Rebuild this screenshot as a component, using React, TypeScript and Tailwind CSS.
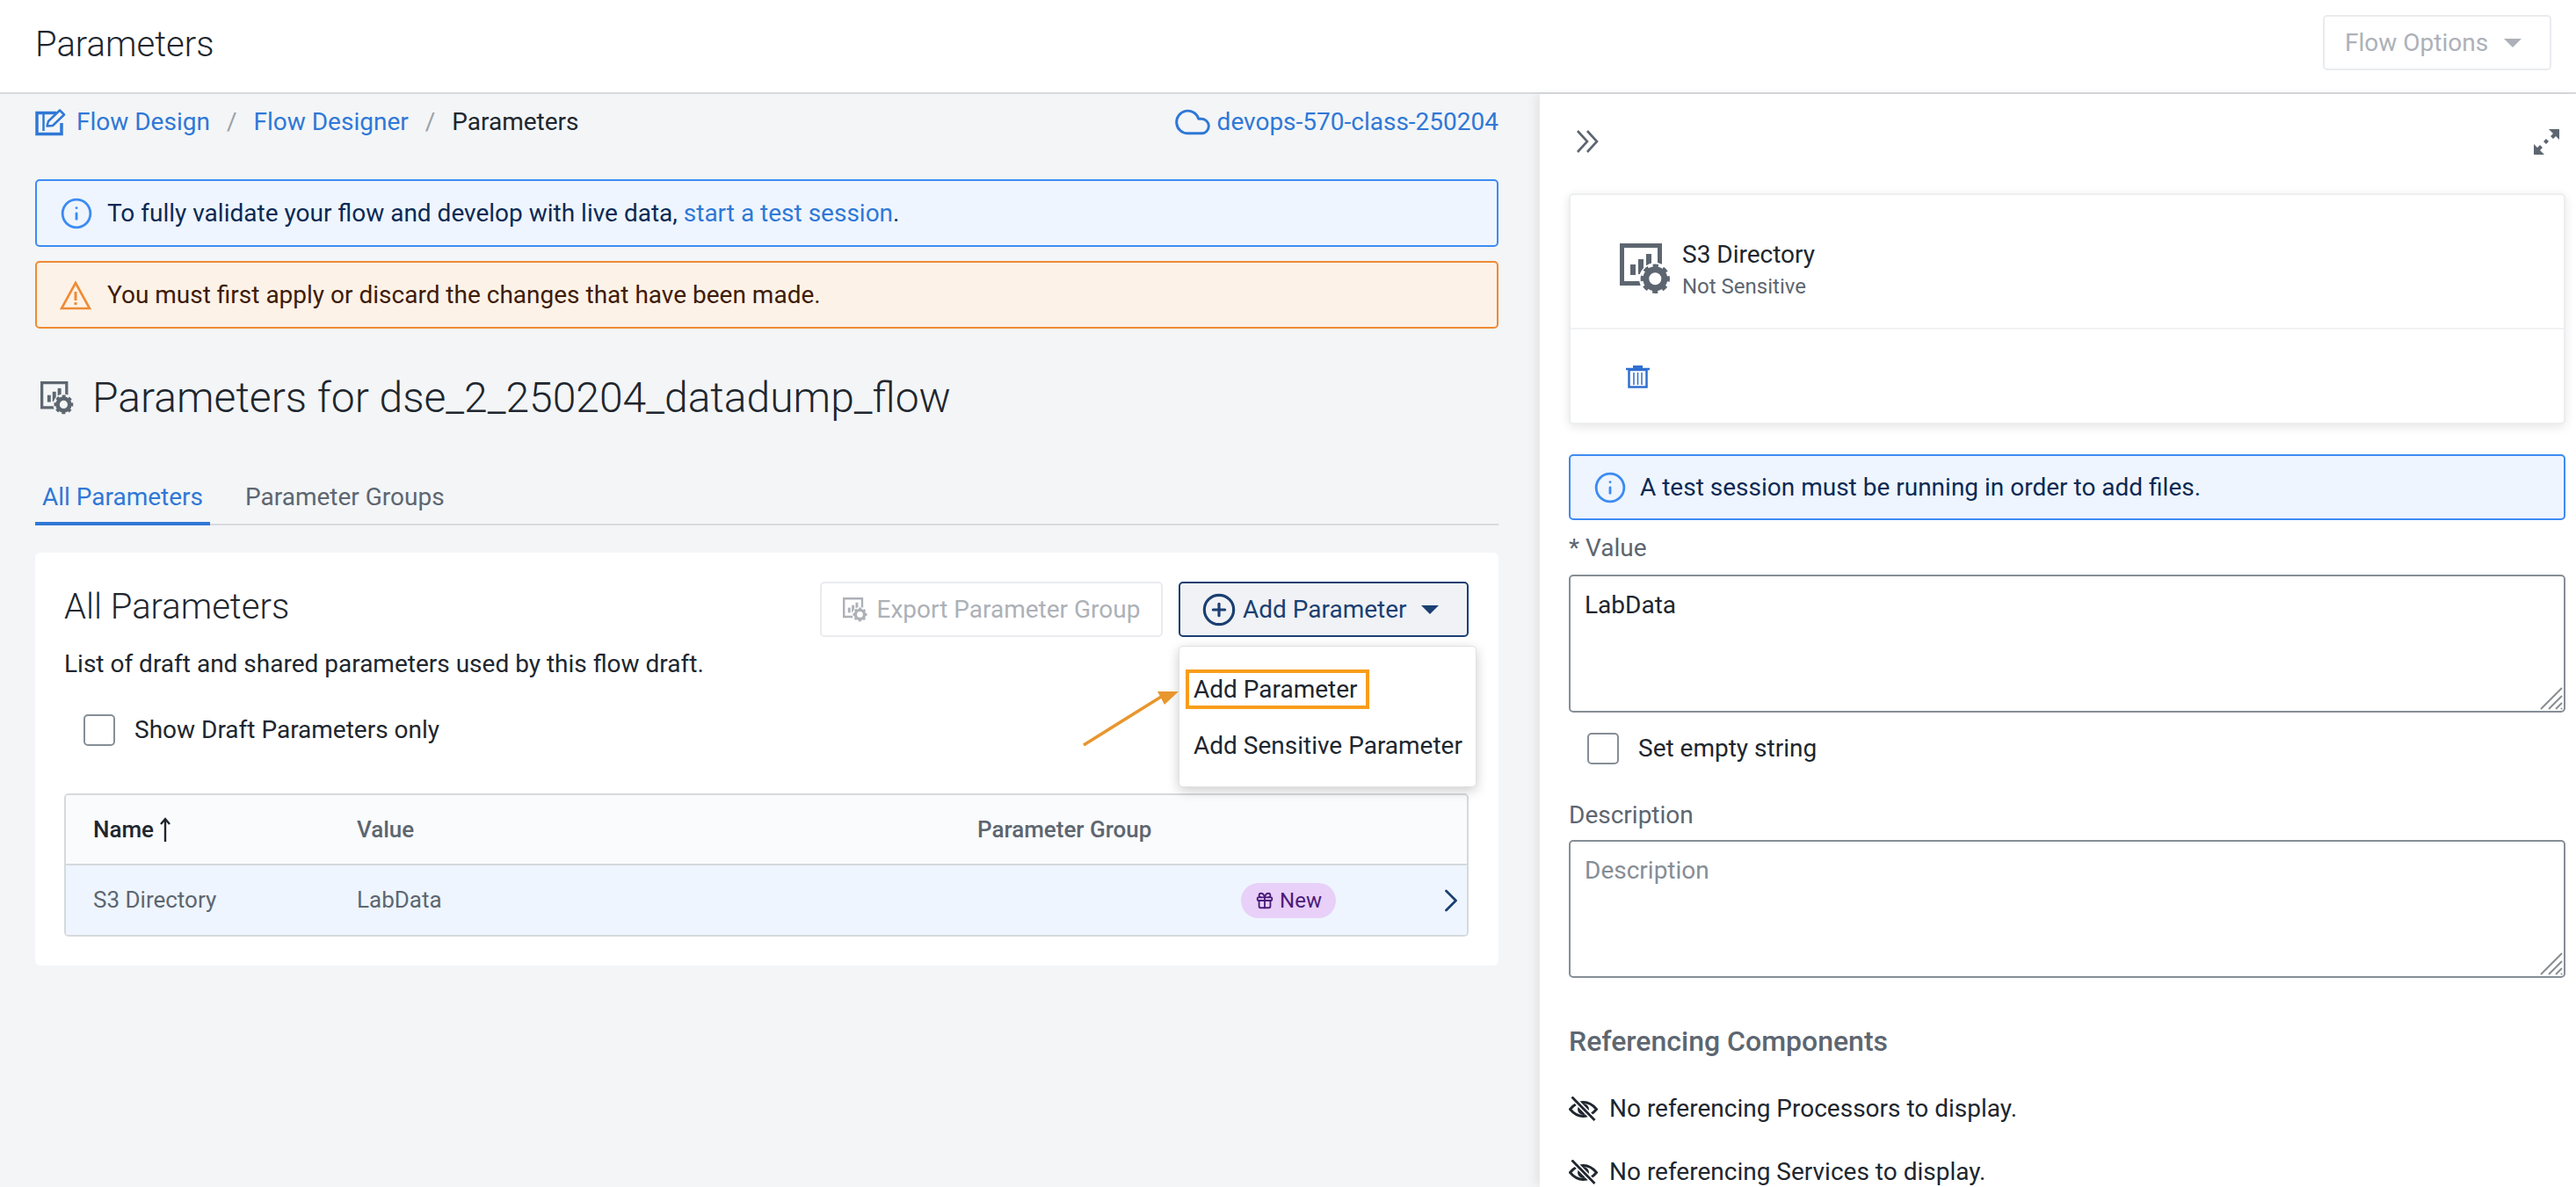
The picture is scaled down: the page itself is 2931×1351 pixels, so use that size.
import React from 'react';
import { Info, ChevronRight, Gift, CirclePlus, Cloud } from 'lucide-react';

// bars in a box with a gear on the corner; the halo has to match what's behind it
const ParamIcon: React.FC<{ className?: string; halo?: string }> = ({ className, halo = '#ffffff' }) => (
    <svg viewBox="0 0 58 58" className={className} fill="currentColor">
        <path d="M0 0h48v48H0zM5 5v38h38V5z" fillRule="evenodd" />
        <rect x="12" y="24" width="6" height="12" />
        <rect x="21" y="18" width="6" height="17" />
        <rect x="30" y="12" width="6" height="13" />
        <circle cx="40.300" cy="40.300" r="18.200" fill={halo} />
        <circle cx="40.300" cy="40.300" r="10.500" fill="none" stroke="currentColor" strokeWidth="7" />
        <circle cx="40.300" cy="40.300" r="14.700" fill="none" stroke="currentColor" strokeWidth="4" strokeDasharray="6 5.550" transform="rotate(-11.700 40.300 40.300)" />
    </svg>
);

const FlowDesignIcon = () => (
    <svg viewBox="0 0 38 32" className="w-[38px] h-[32px] text-[#2f78d6]" fill="none" stroke="currentColor">
        <path d="M24 5.500H2v24h28V17" strokeWidth="3.500" />
        <path d="M9.500 6v20" strokeWidth="2.500" />
        <path d="M13.500 20.500l1.500-5.500L28 2.500l5 5-13 12.500z" strokeWidth="2.500" strokeLinejoin="round" />
    </svg>
);

const EyeSlash = () => (
    <svg viewBox="0 0 34 28" className="w-[34px] h-[28px] text-[#20262e]" fill="none" stroke="currentColor">
        <path d="M1.500 14.500C6 9 11 6.500 16.500 6.500S27 9 31.500 14.500C27 20 22 22.500 16.500 22.500S6 20 1.500 14.500z" strokeWidth="2.800" />
        <circle cx="16.500" cy="14.500" r="6.500" fill="currentColor" stroke="none" />
        <path d="M3.500 0.500l26 26.500" stroke="#ffffff" strokeWidth="6" />
        <path d="M3.500 0.500l26 26.500" strokeWidth="2.800" />
    </svg>
);

const DoubleChevron = () => (
    <svg viewBox="0 0 27 26" className="w-[27px] h-[26px] text-[#5d6670]" fill="none" stroke="currentColor" strokeWidth="2.600">
        <path d="M2 1l11 12L2 25M13 1l11 12-11 12" />
    </svg>
);

const Expand = () => (
    <svg viewBox="0 0 29 29" className="w-[29px] h-[29px] text-[#5d6670]" fill="currentColor">
        <path d="M17 0h12v12l-4-4-3 3-3-3 3-3zM0 29V17l4 4 3-3 3 3-3 3 5 5z" />
        <path d="M11 14l3-3 3 3-3 3z" />
    </svg>
);

const TrashIcon = () => (
    <svg viewBox="0 0 27 27" className="w-[27px] h-[27px] text-[#2f6fd0]" fill="none" stroke="currentColor">
        <path d="M0 5h27" strokeWidth="2.500" />
        <rect x="8" y="1" width="11" height="3" fill="currentColor" stroke="none" />
        <rect x="3.500" y="6" width="20" height="19.500" strokeWidth="2.500" />
        <path d="M9 9v14M13.500 9v14M18 9v14" strokeWidth="1.500" />
    </svg>
);

const WarnIcon = () => (
    <svg viewBox="0 0 36 34" className="w-[36px] h-[34px] text-[#ef8a34]" fill="none" stroke="currentColor">
        <path d="M18 3L34 32H2z" strokeWidth="2.600" />
        <path d="M18 13v10M18 25v3" strokeWidth="3" />
    </svg>
);

const SortArrow = () => (
    <svg viewBox="0 0 14 28" className="ml-[6px] w-[14px] h-[28px] text-[#20262e]" fill="none" stroke="currentColor" strokeWidth="2.400">
        <path d="M7 2v26M2 8l5-6 5 6" />
    </svg>
);

const Grip = () => (
    <svg viewBox="0 0 26 26" className="absolute right-[3px] bottom-[3px] w-[26px] h-[26px] text-[#8a8d90] pointer-events-none" stroke="currentColor" strokeWidth="2">
        <path d="M1 25L25 1M10 25L25 10M18 25l7-7M24 25l1-1" />
    </svg>
);

const Caret: React.FC<{ className: string }> = ({ className }) => (
    <span className={`inline-block w-0 h-0 border-x-[10px] border-x-transparent border-t-[10px] ${className}`} />
);

const Alert: React.FC<{ children: React.ReactNode; className?: string }> = ({ children, className }) => (
    <div className={`h-[77px] rounded-[5px] border-2 flex items-center text-[28px] ${className}`}>{children}</div>
);

const Checkbox: React.FC<{ label: string; className?: string }> = ({ label, className }) => (
    <div className={`h-[36px] flex items-center ${className}`}>
        <span className="w-[36px] h-[36px] rounded-[5px] border-2 border-[#868e96] bg-white shrink-0" />
        <span className="ml-[22px] text-[28px] text-[#20262e]">{label}</span>
    </div>
);

const App: React.FC = () => {
    return (
        <div className="w-[2931px] h-[1351px] overflow-hidden flex flex-col bg-[#f3f5f7] font-['Roboto',sans-serif]">
            <header className="h-[107px] shrink-0 bg-white border-b-2 border-[#d8dade] flex items-center justify-between pl-10 pr-7">
                <h1 className="text-[40px] font-light text-[#20262e] -mt-[4px]">Parameters</h1>
                <button className="w-[260px] h-[63px] -mt-[8px] pl-[23px] rounded-[5px] border-2 border-[#e9ebee] bg-white text-[28px] text-[#adb1b7] flex items-center gap-[18px]">
                    Flow Options <Caret className="border-t-[#adb1b7]" />
                </button>
            </header>

            <div className="flex flex-1 min-h-0">
                <main className="w-[1752px] shrink-0 pl-10 pr-[47px]">
                    <nav className="h-[64px] flex items-center text-[28px]">
                        <FlowDesignIcon />
                        <a className="ml-[9px] text-[#2f78d6]">Flow Design</a>
                        <span className="mx-[19px] text-[#9ba1a8]">/</span>
                        <a className="text-[#2f78d6]">Flow Designer</a>
                        <span className="mx-[19px] text-[#9ba1a8]">/</span>
                        <span className="text-[#20262e]">Parameters</span>
                        <span className="ml-auto flex items-center text-[#2f78d6]">
                            <Cloud className="w-[44px] h-[44px]" strokeWidth={1.6} />
                            <span className="ml-[6px]">devops-570-class-250204</span>
                        </span>
                    </nav>

                    <Alert className="mt-[33px] border-[#3d8bf2] bg-[#eef5fe] text-[#0b2a55]">
                        <Info className="ml-[26px] w-[38px] h-[38px] text-[#3d8bf2]" strokeWidth={1.8} />
                        <span className="ml-[16px]">To fully validate your flow and develop with live data, <a className="text-[#2f78d6]">start a test session</a>.</span>
                    </Alert>
                    <Alert className="mt-[16px] border-[#ef8a34] bg-[#fdf2e7] text-[#3f1b08]">
                        <span className="ml-[26px]"><WarnIcon /></span>
                        <span className="ml-[18px]">You must first apply or discard the changes that have been made.</span>
                    </Alert>

                    <div className="mt-[47px] h-[64px] flex items-center">
                        <ParamIcon className="ml-[6px] w-[38px] h-[38px] text-[#5d6670]" halo="#f3f5f7" />
                        <h2 className="ml-[21px] text-[48px] font-light text-[#20262e]">Parameters for dse_2_250204_datadump_flow</h2>
                    </div>

                    <div className="mt-[45px] h-[68px] flex border-b-2 border-[#d8dade] text-[28px]">
                        <div className="w-[199px] h-[68px] flex justify-center pt-[15px] border-b-4 border-[#2f78d6] text-[#2f78d6]">All Parameters</div>
                        <div className="ml-[40px] pt-[15px] text-[#5d6670]">Parameter Groups</div>
                    </div>

                    <section className="relative mt-[31px] bg-white rounded-[6px] pl-[33px] pr-[34px] py-[33px]">
                        <div className="flex items-start">
                            <h3 className="h-[58px] flex items-center text-[40px] font-light text-[#20262e]">All Parameters</h3>
                            <button className="ml-auto w-[390px] h-[63px] rounded-[5px] border-2 border-[#e9ebee] bg-white text-[28px] text-[#adb1b7] flex items-center justify-center">
                                <ParamIcon className="w-[28px] h-[28px]" />
                                <span className="ml-[11px]">Export Parameter Group</span>
                            </button>
                            <button className="ml-[18px] w-[330px] h-[63px] rounded-[5px] border-2 border-[#1b3f72] bg-[#f0f2f5] text-[28px] text-[#1b3f72] flex items-center">
                                <CirclePlus className="ml-[24px] w-[40px] h-[40px]" strokeWidth={1.9} />
                                <span className="ml-[7px]">Add Parameter</span>
                                <Caret className="ml-[16px] border-t-[#1b3f72]" />
                            </button>
                        </div>
                        <p className="mt-[12px] h-[38px] flex items-center text-[28px] text-[#20262e]">List of draft and shared parameters used by this flow draft.</p>
                        <Checkbox label="Show Draft Parameters only" className="mt-[38px] ml-[22px]" />

                        <div className="mt-[54px] border-2 border-[#d6d9dd] rounded-[5px] text-[26px] overflow-hidden">
                            <div className="h-[80px] grid grid-cols-[331px_706px_300px_233px_24px] items-center bg-[#fafbfd] border-b-2 border-[#d6d9dd] font-medium text-[#5d6670]">
                                <span className="pl-[31px] flex items-center text-[#20262e]">Name <SortArrow /></span>
                                <span>Value</span>
                                <span>Parameter Group</span>
                            </div>
                            <div className="h-[79px] grid grid-cols-[331px_706px_300px_233px_24px] items-center bg-[#eef5fe] text-[#5d6670]">
                                <span className="pl-[31px]">S3 Directory</span>
                                <span>LabData</span>
                                <span />
                                <span className="w-[108px] h-[40px] rounded-full bg-[#e8d0f8] text-[#4a1a7a] flex items-center justify-center text-[24px]">
                                    <Gift className="w-[22px] h-[22px]" strokeWidth={2} />
                                    <span className="ml-[6px]">New</span>
                                </span>
                                <ChevronRight className="w-[44px] h-[44px] -ml-[16px] text-[#1b3f72]" strokeWidth={1.5} />
                            </div>
                        </div>

                        <div className="absolute left-[1301px] top-[106px] w-[339px] h-[161px] bg-white rounded-[5px] border border-[#dfe1e4] shadow-[0_4px_14px_rgba(0,0,0,0.2)] text-[28px] text-[#20262e]">
                            <div className="mt-[26px] ml-[7px] w-[209px] h-[45px] border-[4px] border-[#f99d1c] flex items-center pl-[5px]">Add Parameter</div>
                            <div className="mt-[21px] ml-[16px]">Add Sensitive Parameter</div>
                        </div>

                        <svg className="absolute left-[1190px] top-[150px] w-[115px] h-[75px] text-[#e8962e]" viewBox="0 0 115 75" fill="currentColor">
                            <path d="M3 69L96 11" stroke="currentColor" strokeWidth="3.500" fill="none" />
                            <path d="M111 8L87 8l8 15z" />
                        </svg>
                    </section>
                </main>

                <aside className="flex-1 min-w-0 bg-white shadow-[-6px_0_10px_rgba(0,0,0,0.06)] pl-[33px] pr-[12px]">
                    <div className="h-[108px] flex items-center justify-between pl-[8px] pr-[7px]">
                        <DoubleChevron />
                        <Expand />
                    </div>

                    <div className="mt-[5px] h-[263px] rounded-[5px] border-2 border-[#eceef0] bg-white shadow-[0_3px_12px_rgba(0,0,0,0.1)] flex flex-col">
                        <div className="h-[153px] flex items-center border-b-2 border-[#f1f2f4] pl-[56px] pt-[16px]">
                            <ParamIcon className="w-[58px] h-[58px] text-[#5d6670]" />
                            <div className="ml-[13px] mt-[2px]">
                                <div className="text-[28px] leading-[36px] text-[#20262e]">S3 Directory</div>
                                <div className="mt-[2px] text-[24px] leading-[32px] text-[#5d6670]">Not Sensitive</div>
                            </div>
                        </div>
                        <div className="flex-1 flex items-center pl-[63px]">
                            <TrashIcon />
                        </div>
                    </div>

                    <div className="mt-[34px] h-[75px] rounded-[5px] border-2 border-[#3d8bf2] bg-[#eef5fe] text-[#0b2a55] flex items-center text-[28px]">
                        <Info className="ml-[26px] w-[38px] h-[38px] text-[#3d8bf2]" strokeWidth={1.8} />
                        <span className="ml-[15px]">A test session must be running in order to add files.</span>
                    </div>

                    <label className="mt-[13px] h-[38px] flex items-center text-[28px] text-[#5d6670]">* Value</label>
                    <div className="relative mt-[11px] h-[157px]">
                        <textarea readOnly value="LabData" className="w-full h-full resize-none rounded-[5px] border-2 border-[#868e96] px-[16px] py-[12px] text-[28px] text-[#20262e] outline-none" />
                        <Grip />
                    </div>

                    <Checkbox label="Set empty string" className="mt-[23px] ml-[21px]" />

                    <label className="mt-[39px] h-[38px] flex items-center text-[28px] text-[#5d6670]">Description</label>
                    <div className="relative mt-[9px] h-[157px]">
                        <textarea readOnly placeholder="Description" className="w-full h-full resize-none rounded-[5px] border-2 border-[#868e96] px-[16px] py-[12px] text-[28px] text-[#20262e] placeholder:text-[#868e96] outline-none" />
                        <Grip />
                    </div>

                    <h4 className="mt-[52px] h-[40px] flex items-center text-[32px] font-medium text-[#5d6670]">Referencing Components</h4>
                    <div className="mt-[38px] h-[38px] flex items-center text-[28px] text-[#20262e]">
                        <EyeSlash />
                        <span className="ml-[12px]">No referencing Processors to display.</span>
                    </div>
                    <div className="mt-[34px] h-[38px] flex items-center text-[28px] text-[#20262e]">
                        <EyeSlash />
                        <span className="ml-[12px]">No referencing Services to display.</span>
                    </div>
                </aside>
            </div>
        </div>
    );
};

export default App;
